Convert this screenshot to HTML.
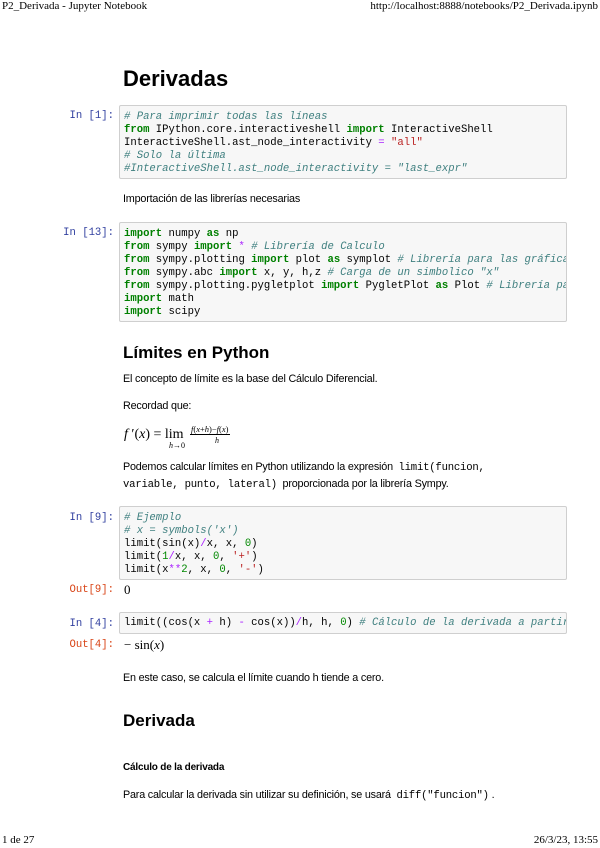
<!DOCTYPE html>
<html><head><meta charset="utf-8"><style>
body{margin:0;width:600px;height:848px;background:#fff;position:relative;overflow:hidden;font-family:"Liberation Sans",sans-serif;color:#000}
.a{position:absolute;white-space:pre}
.hf{font-family:"Liberation Serif",serif;font-size:11px;color:#000}
.box{position:absolute;left:119px;width:446px;border:1px solid #cfcfcf;background:#f7f7f7;border-radius:2px;overflow:hidden}
.code{position:absolute;left:4px;font-family:"Liberation Mono",monospace;font-size:10.6px;line-height:13px;white-space:pre;color:#000}
.p{position:absolute;right:486px;font-family:"Liberation Mono",monospace;font-size:10.6px;color:#303f9f;white-space:pre}
.o{color:#d84315}
.k{color:#008000;font-weight:bold}.c{color:#408080;font-style:italic}.s{color:#ba2121}.op{color:#aa22ff}.n{color:#080}
.t{position:absolute;left:123px;font-size:10.8px;white-space:pre;letter-spacing:-0.2px}
h1,h2{margin:0;position:absolute;left:123px;font-weight:bold}
.m{font-family:"Liberation Mono",monospace;font-size:10.6px}
.serif{font-family:"Liberation Serif",serif}
</style></head><body>
<div class="a hf" style="left:2px;top:0px">P2_Derivada - Jupyter Notebook</div>
<div class="a hf" style="right:2px;top:0px">http://localhost:8888/notebooks/P2_Derivada.ipynb</div>
<div class="a hf" style="left:2px;top:834px">1 de 27</div>
<div class="a hf" style="right:2px;top:834px">26/3/23, 13:55</div>

<h1 style="top:66px;font-size:22px">Derivadas</h1>

<div class="p" style="top:110px">In [1]:</div>
<div class="box" style="top:105px;height:72px"><div class="code" style="top:5px"><span class="c"># Para imprimir todas las líneas</span>
<span class="k">from</span> IPython.core.interactiveshell <span class="k">import</span> InteractiveShell
InteractiveShell.ast_node_interactivity <span class="op">=</span> <span class="s">"all"</span>
<span class="c"># Solo la última</span>
<span class="c">#InteractiveShell.ast_node_interactivity = "last_expr"</span></div></div>

<div class="t" style="top:193px">Importación de las librerías necesarias</div>

<div class="p" style="top:227px">In [13]:</div>
<div class="box" style="top:222px;height:98px"><div class="code" style="top:5px"><span class="k">import</span> numpy <span class="k">as</span> np
<span class="k">from</span> sympy <span class="k">import</span> <span class="op">*</span> <span class="c"># Librería de Calculo</span>
<span class="k">from</span> sympy.plotting <span class="k">import</span> plot <span class="k">as</span> symplot <span class="c"># Librería para las gráficas</span>
<span class="k">from</span> sympy.abc <span class="k">import</span> x, y, h,z <span class="c"># Carga de un simbolico "x"</span>
<span class="k">from</span> sympy.plotting.pygletplot <span class="k">import</span> PygletPlot <span class="k">as</span> Plot <span class="c"># Librería para</span>
<span class="k">import</span> math
<span class="k">import</span> scipy</div></div>

<h2 style="top:343px;font-size:17px">Límites en Python</h2>
<div class="t" style="top:373px">El concepto de límite es la base del Cálculo Diferencial.</div>
<div class="t" style="top:400px">Recordad que:</div>
<div class="a serif" style="left:124px;top:427px;font-size:14px"><i>f</i> ′(<i>x</i>) = lim</div>
<div class="a serif" style="left:169px;top:441px;font-size:8px"><i>h</i>→0</div>
<div class="a serif" style="left:190px;top:424px;font-size:8.5px;border-bottom:0.7px solid #000;padding:0 1px"><i>f</i>(<i>x</i>+<i>h</i>)−<i>f</i>(<i>x</i>)</div>
<div class="a serif" style="left:215px;top:436px;font-size:8px"><i>h</i></div>

<div class="t" style="top:461px">Podemos calcular límites en Python utilizando la expresión  <span class="m">limit(funcion,</span></div>
<div class="t" style="top:478px"><span class="m">variable, punto, lateral)</span>  proporcionada por la librería Sympy.</div>

<div class="p" style="top:512px">In [9]:</div>
<div class="box" style="top:506px;height:72px"><div class="code" style="top:5px"><span class="c"># Ejemplo</span>
<span class="c"># x = symbols('x')</span>
limit(sin(x)<span class="op">/</span>x, x, <span class="n">0</span>)
limit(<span class="n">1</span><span class="op">/</span>x, x, <span class="n">0</span>, <span class="s">'+'</span>)
limit(x<span class="op">**</span><span class="n">2</span>, x, <span class="n">0</span>, <span class="s">'-'</span>)</div></div>
<div class="p o" style="top:584px">Out[9]:</div>
<div class="a serif" style="left:124px;top:582px;font-size:13px">0</div>

<div class="p" style="top:618px">In [4]:</div>
<div class="box" style="top:612px;height:20px"><div class="code" style="top:4px">limit((cos(x <span class="op">+</span> h) <span class="op">-</span> cos(x))<span class="op">/</span>h, h, <span class="n">0</span>) <span class="c"># Cálculo de la derivada a partir</span></div></div>
<div class="p o" style="top:639px">Out[4]:</div>
<div class="a serif" style="left:124px;top:637px;font-size:13px">− sin(<i>x</i>)</div>

<div class="t" style="top:672px">En este caso, se calcula el límite cuando h tiende a cero.</div>

<h2 style="top:711px;font-size:17px">Derivada</h2>
<div class="t" style="top:762px;font-weight:bold;font-size:10px">Cálculo de la derivada</div>
<div class="t" style="top:789px">Para calcular la derivada sin utilizar su definición, se usará  <span class="m">diff("funcion")</span> .</div>
</body></html>
